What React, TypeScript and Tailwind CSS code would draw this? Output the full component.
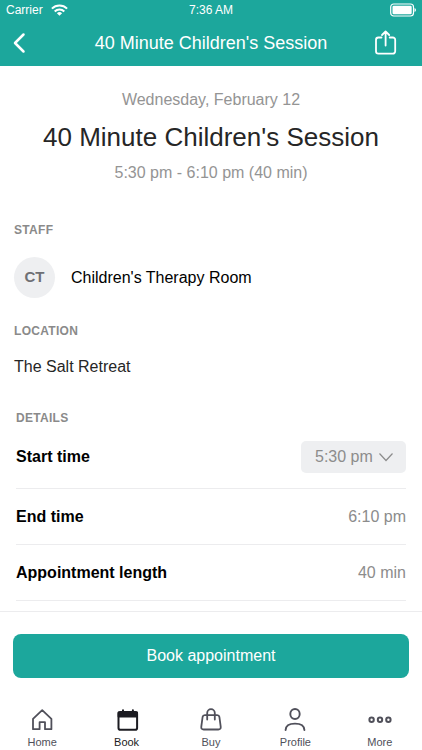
import React from "react";

type Tab = { label: string; active?: boolean; icon: React.ReactNode };

const tabs: Tab[] = [
  {
    label: "Home",
    icon: (
      <svg viewBox="0 0 24 24" className="size-6" fill="none" stroke="currentColor" strokeWidth="1.8" strokeLinejoin="round">
        <path d="M3 21.200V10.900L12.200 2.200l9.200 8.700v10.300h-6.400v-7h-5.400v7z" />
      </svg>
    ),
  },
  {
    label: "Book",
    active: true,
    icon: (
      <svg viewBox="0 0 24 24" className="size-6" fill="none" stroke="currentColor" strokeWidth="2" strokeLinecap="round">
        <rect x="3.500" y="3.900" width="18.600" height="17.800" rx="1.800" />
        <path d="M3.600 4.400h18.400v4.200H3.600z" fill="currentColor" strokeLinejoin="round" />
        <path d="M8 2.300v2M17.900 2.300v2" />
      </svg>
    ),
  },
  {
    label: "Buy",
    icon: (
      <svg viewBox="0 0 24 24" className="size-6" fill="none" stroke="currentColor" strokeWidth="1.800" strokeLinecap="round" strokeLinejoin="round">
        <path d="M5.800 7.200h12.400q1.900 0 2.200 1.800l1.300 9.600q.4 2.900-2.400 2.900H4.700q-2.800 0-2.400-2.900L3.600 9q.3-1.800 2.200-1.800z" />
        <path d="M8.200 11.600V5a3.800 3.800 0 0 1 7.600 0v6.600" />
      </svg>
    ),
  },
  {
    label: "Profile",
    icon: (
      <svg viewBox="0 0 24 24" className="size-6" fill="none" stroke="currentColor" strokeWidth="1.900" strokeLinecap="round">
        <ellipse cx="12" cy="6" rx="4.700" ry="5" />
        <path d="M2.600 22c.2-4.400 3.600-6.400 9.400-6.400s9.200 2 9.400 6.400" />
      </svg>
    ),
  },
  {
    label: "More",
    icon: (
      <svg viewBox="0 0 24 24" className="size-6" fill="none" stroke="currentColor" strokeWidth="2">
        <circle cx="3.600" cy="11.800" r="2.200" />
        <circle cx="12" cy="11.800" r="2.200" />
        <circle cx="20.400" cy="11.800" r="2.200" />
      </svg>
    ),
  },
];

function StatusBar() {
  return (
    <div className="grid h-5 grid-cols-3 items-center px-1.5 text-xs leading-5">
      <div className="flex items-center gap-2">
        <span>Carrier</span>
        <svg viewBox="0 0 17 12" className="h-3 w-[17px]" fill="none" stroke="currentColor" strokeWidth="2" aria-hidden="true">
          <path d="M.9 4.600a10.800 10.800 0 0 1 15.200 0M3.700 7.500a6.800 6.800 0 0 1 9.600 0" />
          <path d="M8.500 11.800L5.900 9.200a3.700 3.700 0 0 1 5.200 0z" fill="currentColor" stroke="none" />
        </svg>
      </div>
      <span className="text-center">7:36 AM</span>
      <svg viewBox="0 0 26 14" className="h-3.5 w-[26px] justify-self-end" fill="none" aria-hidden="true">
        <rect x=".7" y="1" width="22.800" height="12" rx="3" stroke="currentColor" strokeWidth="1.200" />
        <rect x="2.500" y="2.800" width="19.200" height="8.400" rx="1.200" fill="currentColor" />
        <path d="M24.500 5q1.500.6 1.500 2t-1.500 2z" fill="currentColor" />
      </svg>
    </div>
  );
}

function SectionTitle({ children }: { children: React.ReactNode }) {
  return <h2 className="text-xs leading-4 font-bold tracking-wide text-[#8a8a8a]">{children}</h2>;
}

function DetailRow({ label, value }: { label: string; value: string }) {
  return (
    <div className="flex h-14 items-center justify-between border-b border-[#ececee] text-base">
      <dt className="font-bold text-black">{label}</dt>
      <dd className="text-[#8c8c8c]">{value}</dd>
    </div>
  );
}

export default function App() {
  return (
    <div className="flex h-screen flex-col bg-white font-['Liberation_Sans',Arial,sans-serif] text-black">
      <header className="shrink-0 bg-[#1ca79c] text-white">
        <StatusBar />
        <div className="grid h-[46px] grid-cols-[48px_1fr_48px] items-center px-3">
          <button type="button" aria-label="Back">
            <svg viewBox="0 0 16 24" className="h-6 w-4" fill="none" stroke="currentColor" strokeWidth="2.500" strokeLinecap="round" strokeLinejoin="round">
              <path d="M11.500 3.500L3 12l8.500 8.500" />
            </svg>
          </button>
          <span className="text-center text-lg leading-6">40 Minute Children's Session</span>
          <button type="button" aria-label="Share" className="justify-self-center">
            <svg viewBox="0 0 24 26" className="h-[26px] w-6" fill="none" stroke="currentColor" strokeWidth="1.800" strokeLinecap="round" strokeLinejoin="round">
              <path d="M7.500 7.500H4.400a2.400 2.400 0 0 0-2.400 2.400v11.400a2.400 2.400 0 0 0 2.400 2.400h14.400a2.400 2.400 0 0 0 2.400-2.400V9.900a2.400 2.400 0 0 0-2.400-2.400h-3.100M11.600 15.500V1.500M8 5l3.600-3.600L15.200 5" />
            </svg>
          </button>
        </div>
      </header>

      <main className="min-h-0 flex-1 overflow-hidden">
        <section className="pt-[22px] text-center">
          <p className="text-base text-[#949494]">Wednesday, February 12</p>
          <h1 className="mt-[9px] text-[26px] leading-8 text-[#262626]">40 Minute Children's Session</h1>
          <p className="mt-2 text-base text-[#949494]">5:30 pm - 6:10 pm (40 min)</p>
        </section>

        <section className="mt-[37px] px-3.5">
          <SectionTitle>STAFF</SectionTitle>
          <div className="mt-[19px] flex items-center gap-4">
            <span className="flex size-[41px] items-center justify-center rounded-full bg-[#eeeff1] text-[15px] font-bold text-[#6e7075]">CT</span>
            <span className="text-base">Children's Therapy Room</span>
          </div>
        </section>

        <section className="mt-[25px] px-3.5">
          <SectionTitle>LOCATION</SectionTitle>
          <p className="mt-4 text-base text-[#262626]">The Salt Retreat</p>
        </section>

        <section className="mt-[31px] px-4">
          <SectionTitle>DETAILS</SectionTitle>
          <div className="flex h-[63px] items-center justify-between border-b border-[#ececee] text-base">
            <label htmlFor="start-time" className="font-bold">Start time</label>
            <div className="grid items-center">
              <select id="start-time" className="col-start-1 row-start-1 h-8 w-[105px] appearance-none rounded-[5px] bg-[#eeeff1] pl-3.5 text-[#8c8c8c]">
                <option>5:30 pm</option>
              </select>
              <svg viewBox="0 0 16 10" className="pointer-events-none col-start-1 row-start-1 mr-3 h-2.5 w-4 justify-self-end text-[#8c8c8c]" fill="none" stroke="currentColor" strokeWidth="1.200">
                <path d="M1.500 1.500L8 8.500l6.500-7" />
              </svg>
            </div>
          </div>
          <dl>
            <DetailRow label="End time" value="6:10 pm" />
            <DetailRow label="Appointment length" value="40 min" />
          </dl>
        </section>
      </main>

      <footer className="shrink-0 border-t border-[#ececee]">
        <div className="px-[13px] pt-[22px]">
          <button type="button" className="h-11 w-full rounded-lg bg-[#1ca79c] text-base text-white">Book appointment</button>
        </div>
        <nav className="mt-[30px] grid grid-cols-5">
          {tabs.map((tab) => (
            <button
              key={tab.label}
              type="button"
              aria-current={tab.active ? "page" : undefined}
              className={`flex flex-col items-center gap-0.5 text-[11px] leading-4 ${tab.active ? "text-[#1c1c22]" : "text-[#50505a]"}`}
            >
              {tab.icon}
              <span>{tab.label}</span>
            </button>
          ))}
        </nav>
      </footer>
    </div>
  );
}
